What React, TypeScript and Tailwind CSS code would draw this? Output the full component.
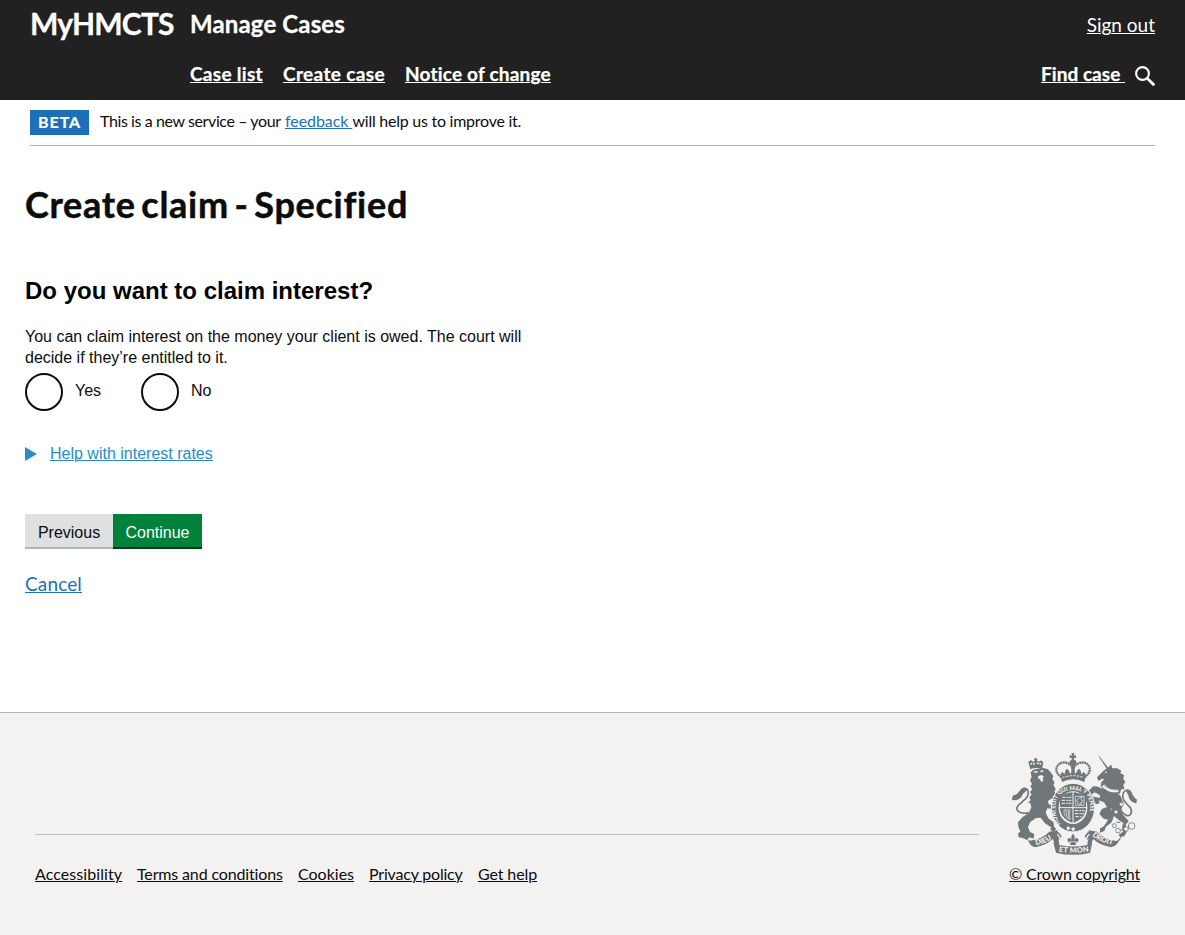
import type { ReactNode } from 'react';

function TextLink({ children, className = '' }: { children: ReactNode; className?: string }) {
  return (
    <a href="#" className={`block whitespace-pre underline underline-offset-[1px] decoration-1 ${className}`}>
      {children}
    </a>
  );
}

function SearchIcon() {
  return (
    <svg className="h-5 w-5" viewBox="0 0 20 20" fill="none" stroke="#fff" strokeWidth="2.1">
      <circle cx="7.5" cy="7.5" r="6.4" />
      <path d="M12.2 12.2 19.3 19.3" strokeWidth="2.8" />
    </svg>
  );
}

function Crest() {
  return (
    <svg className="block h-[102px] w-[125px]" viewBox="36 39 375 306" fill="#6f777b" aria-label="Royal coat of arms">
      <defs>
        <path id="garter" d="M182 252C164 232 162 190 175 168C189 145 248 145 262 168C276 192 274 232 250 258" />
        <path id="dieu" d="M107 315Q139 312 166 288" />
        <path id="mon" d="M176 335Q219 342 266 335" />
        <path id="droit" d="M276 287Q300 309 344 315" />
      </defs>

      {/* lion */}
      <path d="M92 98 Q98 86 112 87 L128 83 144 88 153 98 160 108 157 117 164 128 160 134 167 147 163 155 172 165 169 176 156 175 144 183 146 193 156 196 164 192 162 200 152 206 142 205 137 218 145 235 160 246 163 262 169 267 162 274 151 271 153 262 135 250 122 233 108 234 90 247 84 262 90 276 103 282 101 296 88 292 81 300 68 294 56 292 54 281 61 274 55 261 54 247 68 231 87 218 94 202 91 190 84 187 92 181 88 171 95 164 90 156 97 148 91 139 96 132 90 121 95 111Z" />
      <path d="m98 96 12-3 5 3-7 3ZM119 93l9-2 4 3-7 3ZM115 108l10-3 7 5-4 4 2 8-6 4-4-8-6-3Z" fill="#f3f2f1" />
      <path d="M86 218C59 224 43 211 54 197C69 181 89 173 84 153C79 141 66 143 61 156" fill="none" stroke="#6f777b" strokeWidth="5" />
      <path d="M70 147C55 150 55 164 44 165C38 164 37 171 36 180C51 183 67 174 68 162C76 158 79 151 82 148Z" />
      <path d="m91 88-6-22 7-6 8 6 7-8 9 7 8-4 6 7-4 20Q108 80 91 88Z" />
      <g fill="#f3f2f1"><circle cx="94" cy="71" r="3" /><circle cx="102" cy="71" r="3" /><circle cx="113" cy="70" r="3" /><circle cx="121" cy="71" r="3" /></g>
      <path d="M107 53v12M102 58h10" stroke="#6f777b" strokeWidth="4" />

      {/* unicorn */}
      <path d="m294 45 8 9 26 34-5 3-24-37Z" />
      <path d="m325 82 9-8 3 11 15 0 12 7-3 7 11 7-2 10 6 10-6 8 3 14-9 0-5 14-9-3-8 6-13-12-15-5-12-9 2-13 9-8-8-2-6 6-5-1-3-9 18-18Z" />
      <circle cx="318" cy="97" r="2.5" fill="#f3f2f1" />
      <path d="M304 145Q293 138 280 139L267 151 271 164 275 168 280 158 287 158 300 166 299 174 275 169 268 172 271 181 282 185 289 193 299 190 296 181 312 187 321 201 305 207 298 222 311 236 324 239 317 251 309 261 300 265 300 278 313 273 318 260 335 247 342 228 357 241 370 249 366 261 369 275 356 284 360 291 373 289 381 274 377 255 386 243 369 224 365 207 370 188 362 168 350 158 331 150Z" />
      <path d="M309 136Q331 158 355 152" fill="none" stroke="#f3f2f1" strokeWidth="9" />
      <path d="M308 132Q331 153 357 149M306 143Q330 163 355 158" fill="none" stroke="#6f777b" strokeWidth="3" strokeDasharray="4 3" />
      <path d="M366 216C389 241 399 219 391 203C375 187 362 174 371 157C378 146 389 149 393 159" fill="none" stroke="#6f777b" strokeWidth="5" />
      <path d="M378 153C394 147 396 164 404 173L411 179 409 190C396 188 387 180 385 166Z" />
      <g fill="#f3f2f1" stroke="#6f777b" strokeWidth="2.5">
        <circle cx="364" cy="193" r="6" /><circle cx="348" cy="216" r="6" /><circle cx="334" cy="207" r="3" />
        <circle cx="343" cy="257" r="6" /><circle cx="354" cy="272" r="7" /><circle cx="378" cy="267" r="7" /><circle cx="395" cy="258" r="10" />
      </g>
      <path d="M349 246 361 248M361 270 371 269M384 262 388 261" stroke="#6f777b" strokeWidth="3" />

      {/* crown */}
      <path d="M185 112C153 91 175 60 202 69Q216 75 219 88Q223 75 238 69C265 60 285 91 253 112" fill="none" stroke="#6f777b" strokeWidth="7" strokeDasharray="6 1.5" />
      <path d="m214 39h9l-2 8 7-2v10l-7-2 2 8h-9l2-8-7 2v-10l7 2ZM211 61h16l3 8-6 6v28h-10v-28l-6-6Z" />
      <path d="m181 104 6-9 6 8 5-15 6 0 7 14 8-13 8 13 7-14 6 0 5 15 6-8 7 9-5 22Q219 110 186 126Z" />
      <path d="M187 113Q219 101 252 113" fill="none" stroke="#f3f2f1" strokeWidth="3" strokeDasharray="7 4" />

      {/* garter and shield */}
      <ellipse cx="219" cy="203" rx="65" ry="73" stroke="#f3f2f1" strokeWidth="3" />
      <ellipse cx="219" cy="203" rx="43" ry="49" fill="#f3f2f1" />
      <path d="M180 172Q219 142 258 172V208Q254 238 219 249Q184 238 180 208Z" />
      <path d="M219 155v94M180 203h78" stroke="#f3f2f1" strokeWidth="3" />
      <path d="M187 172h27M185 181h29M185 190h29M225 212h29M225 221h27M226 230h20" stroke="#f3f2f1" strokeWidth="3" strokeDasharray="10 3 5 2" />
      <path d="M226 169h26v27h-26ZM234 192l-4-12 8-6 8-4-3 9 6 5-8 4 4 5ZM192 210h18q-5 15 0 29-20-9-18-29ZM199 212v16M205 212v22" fill="none" stroke="#f3f2f1" strokeWidth="2" />
      <text className="font-['Lato'] text-[17px] font-black" fill="#f3f2f1">
        <textPath href="#garter">HONI SOIT QUI MAL Y PENSE</textPath>
      </text>
      <path d="m200 262 6-3 5 6-4 5-6-1ZM219 262l6 3-2 7h-7l-2-7Z" fill="#f3f2f1" />

      {/* motto ribbon */}
      <path d="M88 302Q126 298 148 275L174 271 168 286Q149 314 107 322Q88 319 83 297ZM153 276Q175 267 185 289L177 300Q167 287 153 291ZM351 303Q312 298 291 275L265 271 270 286Q288 314 333 322Q352 319 366 287ZM286 276Q264 267 254 289L262 300Q272 287 286 291Z" />
      <path d="M157 284Q177 286 178 315 219 324 262 315 263 286 283 284L291 292Q274 295 276 312L270 338Q219 351 168 338L161 311Q164 296 149 291Z" />
      <path d="M172 283Q183 292 181 309M268 283Q257 292 259 309" fill="none" stroke="#f3f2f1" strokeWidth="4" />
      <g className="font-['Lato'] text-[22px] font-black" fill="#f3f2f1">
        <text><textPath href="#dieu">DIEU</textPath></text>
        <text className="tracking-[1px]"><textPath href="#mon">ET MON</textPath></text>
        <text><textPath href="#droit">DROIT</textPath></text>
      </g>
      <path d="M196 279Q219 284 242 279L251 309Q219 315 188 309Z" fill="#f3f2f1" />
      <path d="M219 281q-10 9-1 20-12-13-16-1 3 12 12 5l-5 10h20l-5-10q9 7 12-5-4-12-16 1 9-11-1-20Z" />
      <path d="M208 305h22" stroke="#f3f2f1" strokeWidth="2" />
    </svg>
  );
}

function Radio({ label, className = '' }: { label: string; className?: string }) {
  return (
    <label className={`flex h-[38px] items-center ${className}`}>
      <input type="radio" name="claim-interest" className="h-[38px] w-[38px] shrink-0 appearance-none rounded-full border-2 border-[#0b0c0c] bg-white" />
      <span className="-mt-[3px] ml-3 text-base">{label}</span>
    </label>
  );
}

export default function App() {
  return (
    <div className="flex min-h-[935px] flex-col bg-white font-['Lato',sans-serif] text-[#0b0c0c] [font-variant-ligatures:none]">
      <header className="h-[100px] bg-[#212121] px-[30px] text-white">
        <div className="flex h-[50px] justify-between">
          <div className="flex [-webkit-text-stroke:0.3px]">
            <div className="w-40 whitespace-nowrap pt-[5px] text-[30px] font-bold leading-9 tracking-[-0.8px]">MyHMCTS</div>
            <div className="whitespace-nowrap pt-[9px] text-[24px] font-bold leading-[30px] tracking-[0.14px]">Manage Cases</div>
          </div>
          <TextLink className="pt-[13px] text-[19px] leading-6">Sign out</TextLink>
        </div>
        <div className="flex h-[50px] justify-between pl-40 text-[19px] font-bold leading-6 [-webkit-text-stroke:0.25px]">
          <nav className="flex gap-5 pt-[12px]">
            <TextLink className="w-[73px] tracking-[0.3px]">Case list</TextLink>
            <TextLink className="w-[102px] tracking-[0.36px]">Create case</TextLink>
            <TextLink className="tracking-[0.2px]">Notice of change</TextLink>
          </nav>
          <div className="flex gap-[10px] pt-[12px]">
            <TextLink className="tracking-[0.04px]">{'Find case '}</TextLink>
            <div className="pt-1"><SearchIcon /></div>
          </div>
        </div>
      </header>

      <div className="mx-[30px] flex h-[46px] shrink-0 border-b border-[#b1b4b6] pt-[10px]">
        <strong className="h-[25px] w-[59px] bg-[#1d70b8] pl-2 text-base font-bold leading-6 tracking-[0.95px] text-white [-webkit-text-stroke:0.2px]">BETA</strong>
        <p className="flex h-6 whitespace-pre pl-[11px] text-base leading-[22px]">
          <span className="w-[185px] tracking-[-0.4px]">This is a new service – your </span>
          <TextLink className="w-[67.5px] tracking-[-0.08px] text-[#1d70b8]">{'feedback '}</TextLink>
          <span className="tracking-[-0.25px]">will help us to improve it.</span>
        </p>
      </div>

      <main className="flex h-[566px] flex-col items-start px-[25px] pt-[38px] font-['Liberation_Sans',sans-serif] text-base">
        <h1 className="font-['Lato',sans-serif] text-[36px] font-bold leading-10 tracking-[0.72px] [-webkit-text-stroke:0.5px] [word-spacing:-3.8px]">Create claim - Specified</h1>
        <h2 className="mt-[52px] text-[24px] font-bold leading-[30px] text-black">Do you want to claim interest?</h2>
        <p className="mt-5 w-[520px] leading-[21px]">You can claim interest on the money your client is owed. The court will decide if they’re entitled to it.</p>
        <div className="mt-[5px] flex">
          <Radio label="Yes" className="w-[116px]" />
          <Radio label="No" />
        </div>
        <div className="mt-[31px] flex h-6 items-center text-[#2b8cc4]">
          <svg className="mr-[13px] h-[14px] w-3" viewBox="0 0 12 14"><path d="M0 0 12 7 0 14Z" fill="#2b8cc4" /></svg>
          <TextLink>Help with interest rates</TextLink>
        </div>
        <div className="mt-[48px] flex h-[35px]">
          <button className="w-[88px] border-b-2 border-[#b1b4b6] bg-[#dee0e2] pt-[5px]">Previous</button>
          <button className="w-[89px] border-b-2 border-[#003618] bg-[#00823b] pt-[5px] text-white">Continue</button>
        </div>
        <TextLink className="mt-[23px] font-['Lato',sans-serif] text-[19px] leading-6 tracking-[0.14px] text-[#1d70b8]">Cancel</TextLink>
      </main>

      <footer className="flex flex-1 justify-between border-t border-[#b1b4b6] bg-[#f3f2f1] pl-[35px] pr-[45px] text-base leading-6">
        <div className="w-[944px] pt-[121px]">
          <div className="border-t border-[#bfc1c3]" />
          <nav className="flex gap-[15px] pt-[27px]">
            <TextLink className="w-[87px] tracking-[0.07px]">Accessibility</TextLink>
            <TextLink className="w-[146px] tracking-[-0.15px]">Terms and conditions</TextLink>
            <TextLink className="w-[56px]">Cookies</TextLink>
            <TextLink className="w-[94px] tracking-[-0.19px]">Privacy policy</TextLink>
            <TextLink className="tracking-[-0.12px]">Get help</TextLink>
          </nav>
        </div>
        <div className="flex w-[131px] flex-col pt-10">
          <div className="pl-[3px]"><Crest /></div>
          <TextLink className="mt-[7px] tracking-[-0.19px]">© Crown copyright</TextLink>
        </div>
      </footer>
    </div>
  );
}
